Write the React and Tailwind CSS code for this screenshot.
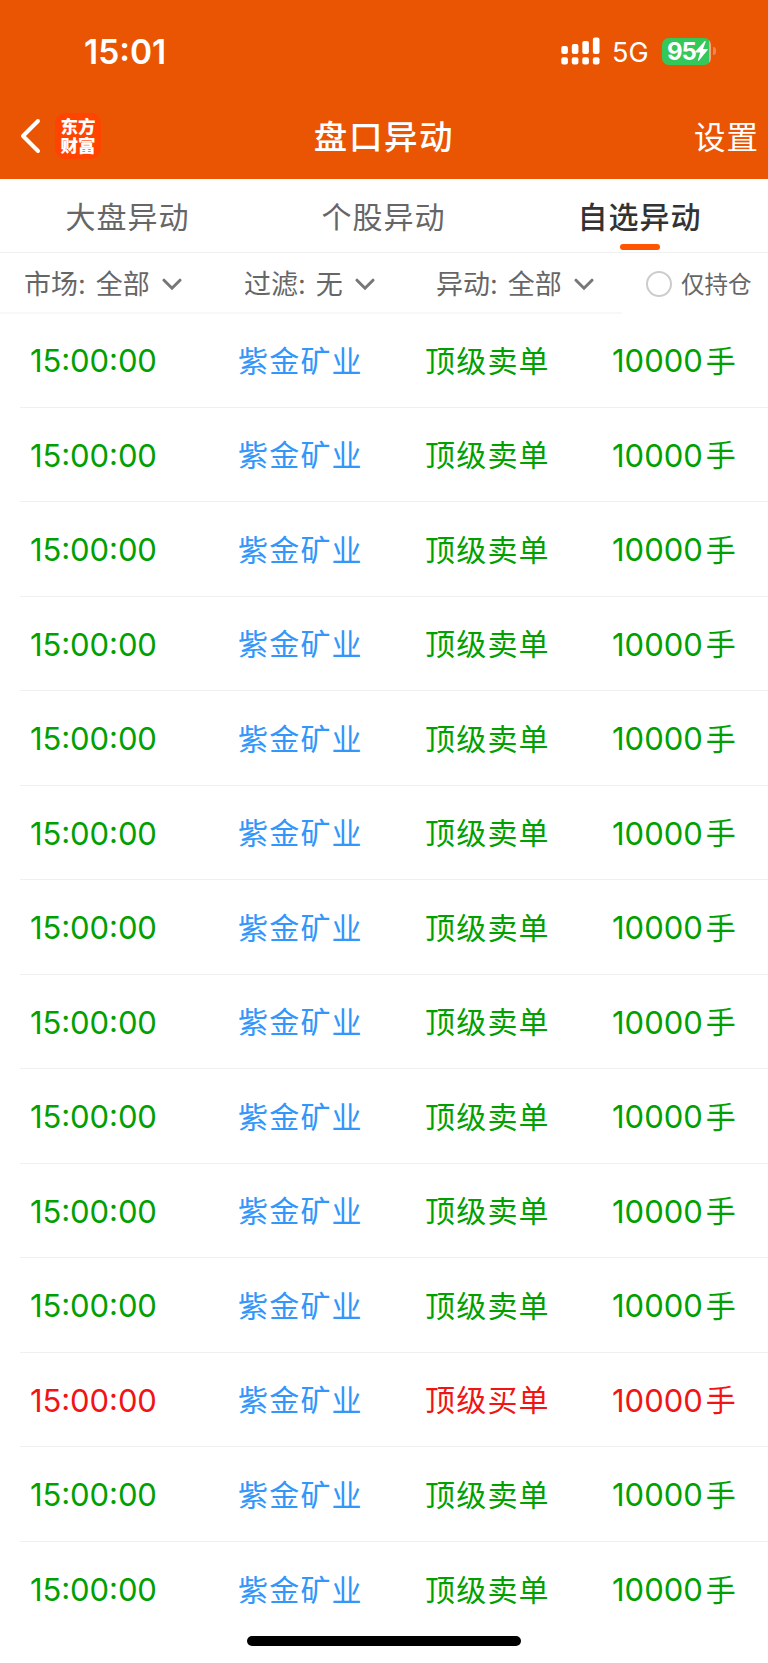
import React from 'react';

const TABS = [
  { label: '大盘异动', active: false },
  { label: '个股异动', active: false },
  { label: '自选异动', active: true },
];

const RECORDS = Array.from({ length: 14 }, (_, index) => ({
  id: index,
  time: '15:00:00',
  name: '紫金矿业',
  side: index === 11 ? 'buy' : 'sell',
  volume: '10000',
}));

const SignalIcon = () => (
  <svg width="39" height="28" viewBox="0 0 39 28" fill="white">
    <rect x="0.3" y="9" width="6.6" height="8" rx="2" />
    <rect x="10.8" y="7" width="6.6" height="10" rx="2" />
    <rect x="21.3" y="4" width="6.6" height="13" rx="2" />
    <rect x="31.9" y="0.5" width="6.6" height="16.5" rx="2" />
    <rect x="0.3" y="20.3" width="6.6" height="7.2" rx="2" />
    <rect x="10.8" y="20.3" width="6.6" height="7.2" rx="2" />
    <rect x="21.3" y="20.3" width="6.6" height="7.2" rx="2" />
    <rect x="31.9" y="20.3" width="6.6" height="7.2" rx="2" />
  </svg>
);

const Battery = () => (
  <div className="flex items-center">
    <div className="flex h-[27px] w-[49px] items-center rounded-[7px] bg-gradient-to-r from-[#34c759] from-96% to-[#f3a680] to-96% pl-[5px]">
      <span className="w-[28px] pt-px text-[24px] leading-none font-bold tracking-[-1px]">95</span>
      <svg width="13" height="20" viewBox="0 0 13 20" fill="white">
        <path d="M9.6 0.3 0.4 10.4c-.4.5-.2 1 .4 1h4.4L3 19c-.2.8.5 1 1 .5l8.6-10.4c.4-.5.2-1-.4-1H8L10.7.8c.2-.8-.6-1-1.1-.5Z" />
      </svg>
    </div>
    <div className="ml-[2px] h-[8px] w-[3px] rounded-r-full bg-[#f08650]" />
  </div>
);

const StatusBar = () => (
  <div className="flex h-[102px] items-center justify-between pr-[52px] pl-[84px]">
    <span className="pt-[3px] text-[33.5px] leading-none font-semibold">15:01</span>
    <div className="flex items-center">
      <SignalIcon />
      <span className="ml-[12px] w-[50px] pt-[2px] text-[27px] leading-none">5G</span>
      <Battery />
    </div>
  </div>
);

const NavBar = () => (
  <div className="grid h-[77px] grid-cols-3 items-start pt-[10px]">
    <div className="flex h-[48px] items-center pl-[20px]">
      <svg width="21" height="36" viewBox="0 0 21 36" fill="none" stroke="white" strokeWidth="4" strokeLinecap="round" strokeLinejoin="round">
        <path d="M18 3 3 18l15 15" />
      </svg>
      <div className="ml-[14px] flex h-[46px] w-[46px] flex-col items-center justify-center rounded-[10px] bg-[#ff4400] text-[17.5px] leading-[19.5px] font-black">
        <span>东方</span>
        <span>财富</span>
      </div>
    </div>
    <h1 className="text-center text-[33.5px] leading-[51px] font-medium tracking-[1.6px]">盘口异动</h1>
    <span className="pr-[9px] text-right text-[31.5px] leading-[51px] tracking-[1px]">设置</span>
  </div>
);

const TabBar = () => (
  <div className="grid h-[74px] grid-cols-3 border-b border-[#f0f0f0]">
    {TABS.map((tab) => (
      <div key={tab.label} className="flex flex-col items-center">
        <span
          className={
            tab.active
              ? 'h-[65px] pr-px text-[30px] leading-[77px] font-medium tracking-[1px] text-[#333333]'
              : 'h-[65px] pr-px text-[30px] leading-[77px] tracking-[1px] text-[#666666]'
          }
        >
          {tab.label}
        </span>
        {tab.active && <div className="h-[6px] w-[40px] rounded-full bg-[#ff5500]" />}
      </div>
    ))}
  </div>
);

const Filter = ({ label, value, className }) => (
  <div className={className}>
    <span>{label}:</span>
    <span className="ml-[10px]">{value}</span>
    <svg className="ml-[12px]" width="20" height="13" viewBox="0 0 20 13" fill="none" stroke="#777777" strokeWidth="3" strokeLinecap="round">
      <path d="m2 2.2 8 8 8-8" />
    </svg>
  </div>
);

const FilterBar = () => (
  <div className="flex h-[61px] text-[27px] leading-none text-[#666666]">
    <div className="flex w-[622px] border-b-2 border-[#f8f8f8] pt-[4px]">
      <Filter label="市场" value="全部" className="flex w-[219px] items-center pl-[24px]" />
      <Filter label="过滤" value="无" className="flex w-[192px] items-center pl-[25px]" />
      <Filter label="异动" value="全部" className="flex items-center pl-[25px]" />
    </div>
    <div className="flex items-center pl-[24px]">
      <div className="h-[26px] w-[26px] rounded-full border-2 border-[#cccccc]" />
      <span className="ml-[9px] pt-[2px] text-[23.5px]">仅持仓</span>
    </div>
  </div>
);

// Digits with the separators lifted to their optical centre
const Time = ({ value }) => (
  <span className="text-[31px] tracking-[-0.1px]">
    {value.split(':').map((part, index) => (
      <React.Fragment key={index}>
        {index > 0 && <span className="relative top-[-2px]">:</span>}
        {part}
      </React.Fragment>
    ))}
  </span>
);

const RecordRow = ({ record }) => {
  const color = record.side === 'buy' ? 'text-[#f01414]' : 'text-[#00a000]';

  return (
    <div className="ml-[20px] h-[94.5px] border-b border-[#f0f0f0] last:border-b-0">
      <div className={`grid h-full grid-cols-[208px_187px_187px_auto] items-center pt-[2px] pl-[10px] text-[30px] leading-none tracking-[1.2px] ${color}`}>
        <Time value={record.time} />
        <span className="text-[#3296fa]">{record.name}</span>
        <span>{record.side === 'buy' ? '顶级买单' : '顶级卖单'}</span>
        <span className="flex items-center">
          <span className="text-[31px] tracking-[0px]">{record.volume}</span>
          <span className="ml-[3px]">手</span>
        </span>
      </div>
    </div>
  );
};

const App = () => {
  return (
    <div className="relative h-[1663px] w-[768px] overflow-hidden bg-white font-['Inter','Noto_Sans_CJK_SC',sans-serif]">
      <header className="h-[179px] bg-[#ea5504] text-white">
        <StatusBar />
        <NavBar />
      </header>
      <TabBar />
      <FilterBar />
      <main className="-mt-px">
        {RECORDS.map((record) => (
          <RecordRow key={record.id} record={record} />
        ))}
      </main>
      {/* Home indicator */}
      <div className="absolute bottom-[17px] left-[247px] h-[10px] w-[274px] rounded-full bg-black" />
    </div>
  );
};

export default App;
